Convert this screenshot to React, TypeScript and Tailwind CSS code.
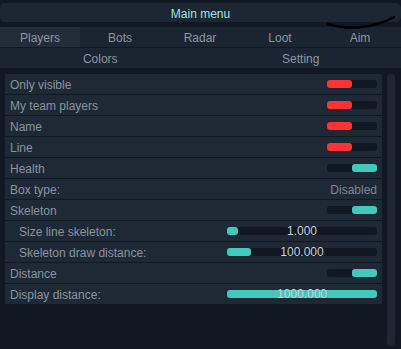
import React from "react";

const font = { fontFamily: '"Liberation Sans", Arial, sans-serif' };

function Toggle({ on, color }: { on: boolean; color: "red" | "teal" }) {
  return (
    <div className="w-[50px] h-[8px] rounded-[3px] bg-[#111822] flex">
      {on ? (
        <>
          <div className="w-[25px]" />
          <div className="w-[25px] h-full rounded-[3px] bg-[#42c9bb]" />
        </>
      ) : (
        <div className={"w-[25px] h-full rounded-[3px] " + (color === "red" ? "bg-[#ff3333]" : "bg-[#42c9bb]")} />
      )}
    </div>
  );
}

function Slider({ pct, value }: { pct: number; value: string }) {
  return (
    <div className="relative w-[150px] h-[8px] rounded-[3px] bg-[#111822]">
      <div className="h-full rounded-[3px] bg-[#42c9bb]" style={{ width: `${pct}%` }} />
      <div className="absolute inset-0 flex items-center justify-center text-[12px] text-[#c9d0d6] leading-none">
        {value}
      </div>
    </div>
  );
}

type Row =
  | { label: string; kind: "toggle"; on: boolean; indent?: boolean }
  | { label: string; kind: "text"; text: string; indent?: boolean }
  | { label: string; kind: "slider"; pct: number; value: string; indent?: boolean };

const rows: Row[] = [
  { label: "Only visible", kind: "toggle", on: false },
  { label: "My team players", kind: "toggle", on: false },
  { label: "Name", kind: "toggle", on: false },
  { label: "Line", kind: "toggle", on: false },
  { label: "Health", kind: "toggle", on: true },
  { label: "Box type:", kind: "text", text: "Disabled" },
  { label: "Skeleton", kind: "toggle", on: true },
  { label: "Size line skeleton:", kind: "slider", pct: 7, value: "1.000", indent: true },
  { label: "Skeleton draw distance:", kind: "slider", pct: 16, value: "100.000", indent: true },
  { label: "Distance", kind: "toggle", on: true },
  { label: "Display distance:", kind: "slider", pct: 100, value: "1000.000" },
];

export default function App() {
  const tabs = ["Players", "Bots", "Radar", "Loot", "Aim"];
  return (
    <div className="relative w-[401px] h-[349px] overflow-hidden bg-[#111822] text-[12px]" style={font}>
      <div className="pt-[3px]">
        <div className="h-[19px] pt-[2px] rounded-[5px] bg-[#1d2734] flex items-center justify-center text-[#a3e2e4]">
          Main menu
        </div>
      </div>
      <svg className="absolute left-0 top-0" width="401" height="40" viewBox="0 0 401 40">
        <path d="M328 24 Q344 29 362 27 Q380 25 394 17" stroke="#000" strokeWidth="2.4" fill="none" strokeLinecap="round" />
      </svg>
      <div className="mt-[5px] h-[20px] flex bg-[#1b2531] border-b border-[#111822] box-content">
        {tabs.map((t, i) => (
          <div
            key={t}
            className={
              "w-[80px] pt-[2px] flex items-center justify-center text-[#8a96a1] " + (i === 0 ? "bg-[#222d3a]" : "")
            }
          >
            {t}
          </div>
        ))}
      </div>
      <div className="h-[20px] flex bg-[#1b2531]">
        <div className="flex-1 pt-[2px] flex items-center justify-center text-[#8a96a1]">Colors</div>
        <div className="flex-1 pt-[2px] flex items-center justify-center text-[#8a96a1]">Setting</div>
      </div>
      <div className="flex mt-[6px] h-[272px]">
        <div className="ml-[5px] w-[377px] self-start flex flex-col gap-px">
          {rows.map((r) => (
            <div
              key={r.label}
              className={
                "h-[20px] bg-[#1f2936] flex items-center justify-between pr-[5px] " +
                (r.indent ? "pl-[14px]" : "pl-[5px]")
              }
            >
              <span className="text-[#8a939d] pt-[2px]">{r.label}</span>
              {r.kind === "toggle" && <Toggle on={r.on} color="red" />}
              {r.kind === "text" && <span className="text-[#7d8791] pt-[2px]">{r.text}</span>}
              {r.kind === "slider" && <Slider pct={r.pct} value={r.value} />}
            </div>
          ))}
        </div>
        <div className="ml-[5px] w-[8px] h-[272px] rounded-[4px] bg-[#1e2834]" />
      </div>
    </div>
  );
}
